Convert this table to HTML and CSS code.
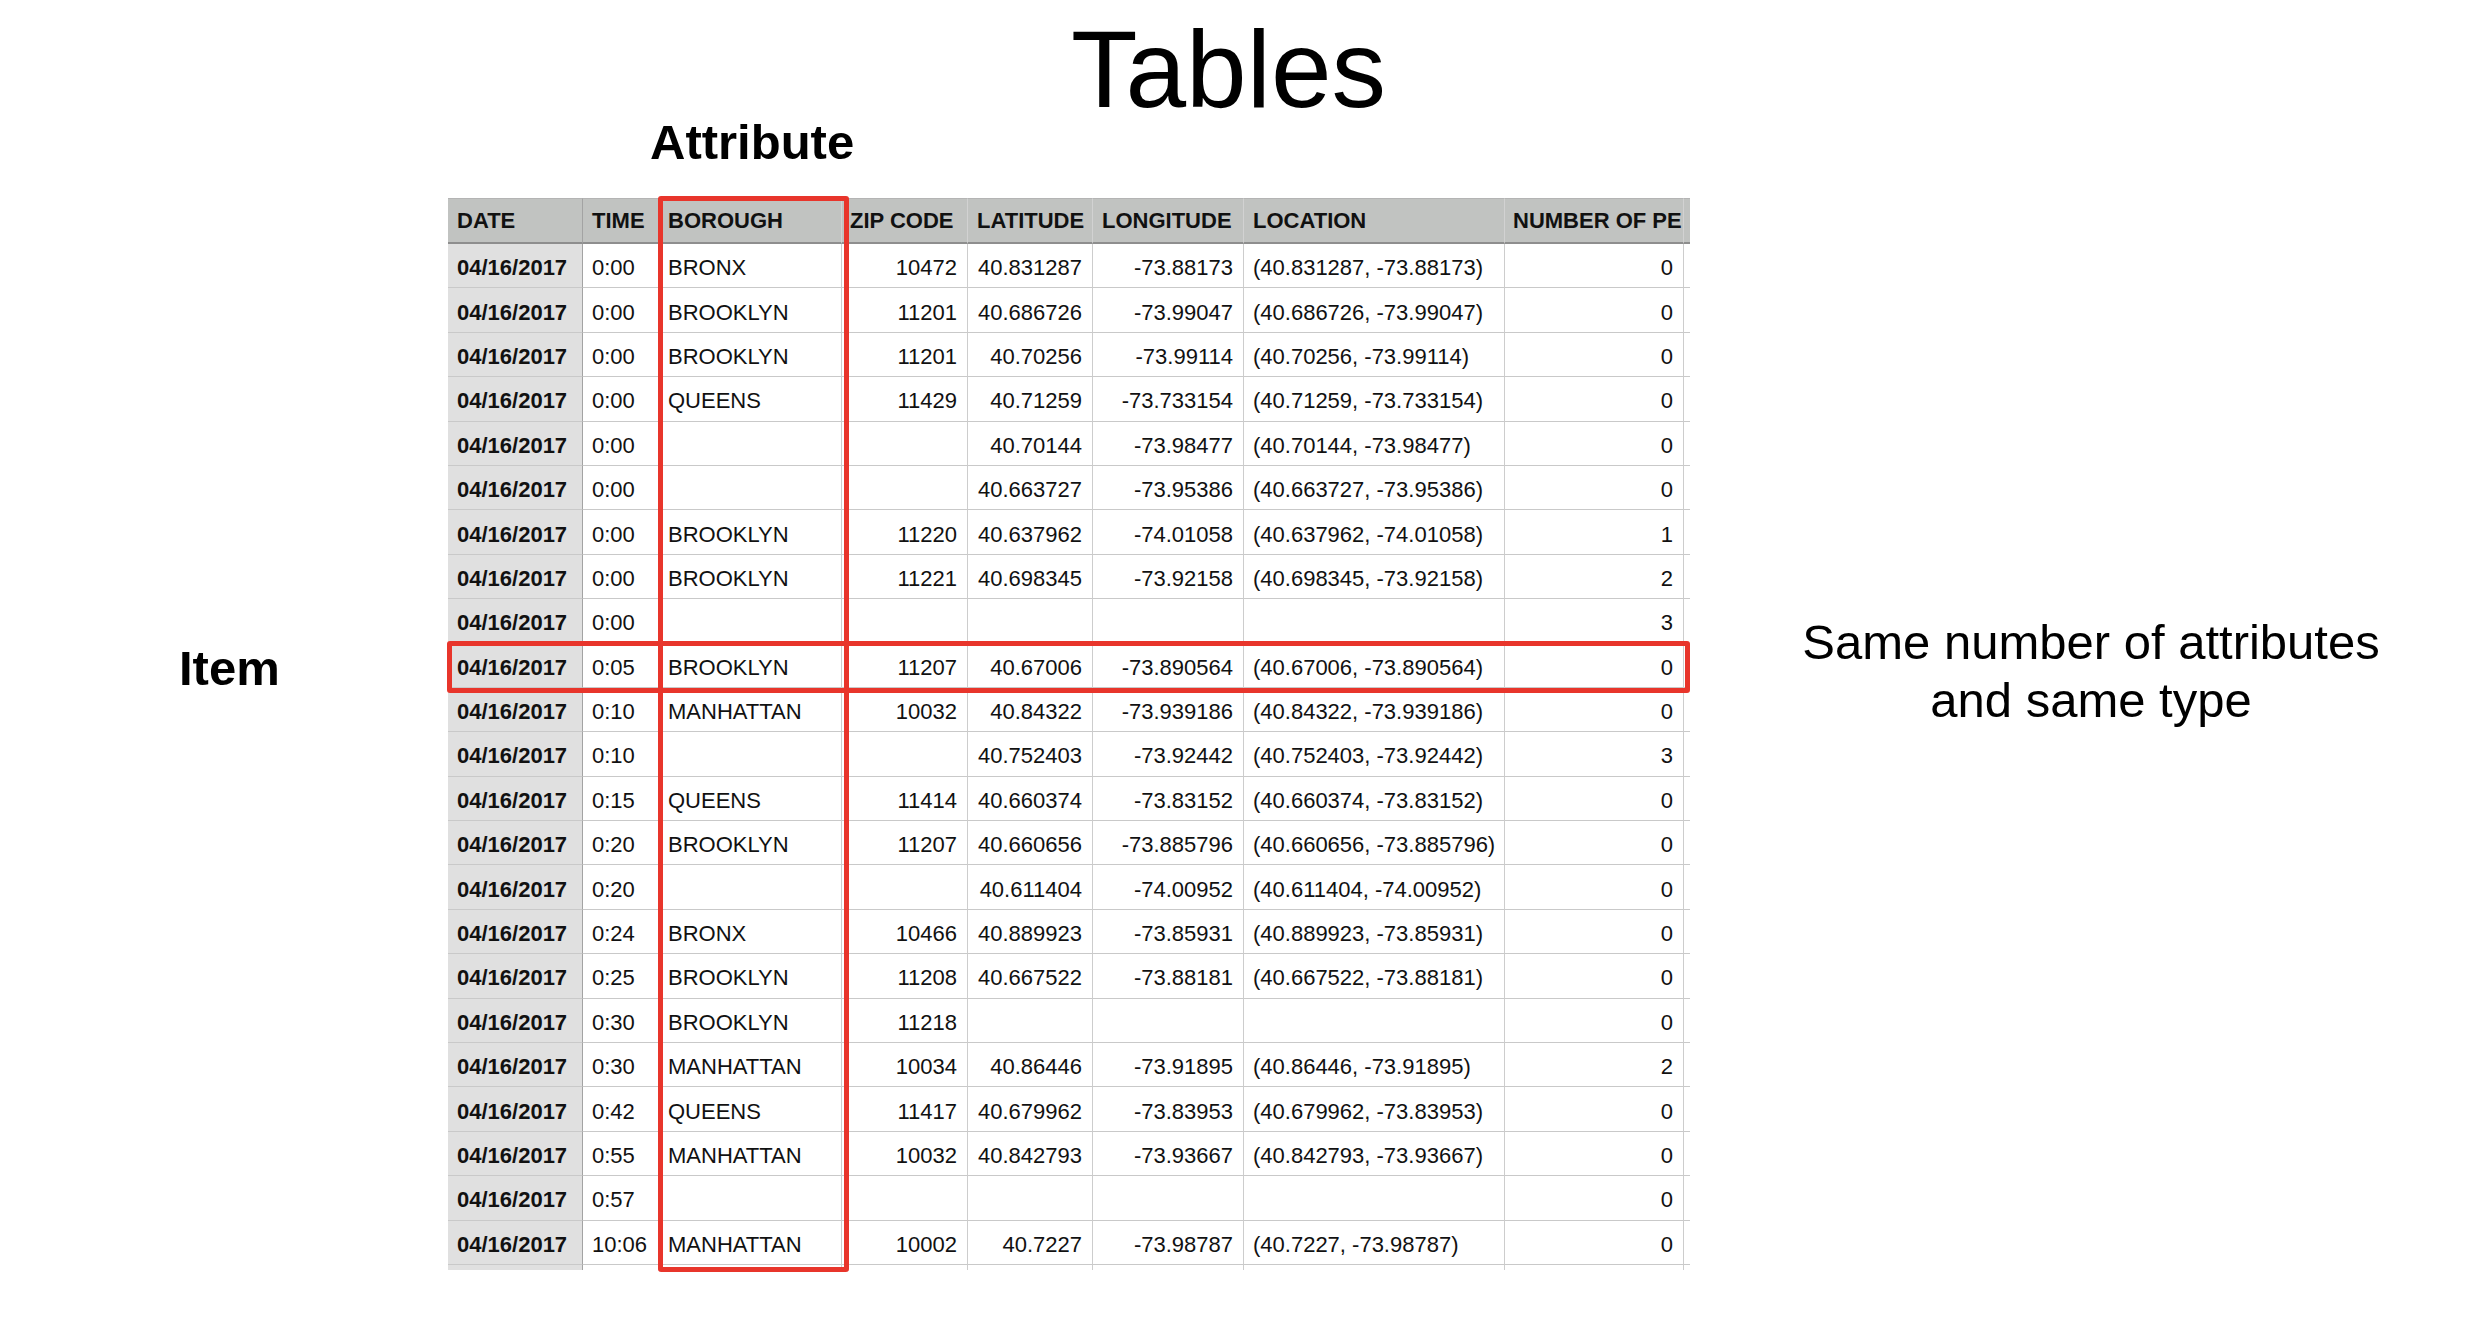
FILE: index.html
```html
<!DOCTYPE html>
<html lang="en">
<head>
<meta charset="utf-8">
<title>Tables</title>
<link rel="stylesheet" href="styles.css">
</head>
<body>
<div class="page">
  <h1 class="title">Tables</h1>
  <div class="content">
    <div class="left-col">
      <div class="item-label">Item</div>
    </div>
    <div class="table-area">
      <div class="attr-label">Attribute</div>
      <div class="table-wrap">
        <table class="sheet">
          <thead>
            <tr>
              <th class="c-date">DATE</th>
              <th class="c-time">TIME</th>
              <th class="c-bor">BOROUGH</th>
              <th class="c-zip">ZIP CODE</th>
              <th class="c-lat">LATITUDE</th>
              <th class="c-lon">LONGITUDE</th>
              <th class="c-loc">LOCATION</th>
              <th class="c-num">NUMBER OF PE</th>
              <th class="c-extra"></th>
            </tr>
          </thead>
          <tbody>
            <tr><td class="d">04/16/2017</td><td>0:00</td><td>BRONX</td><td class="r">10472</td><td class="r">40.831287</td><td class="r">-73.88173</td><td>(40.831287, -73.88173)</td><td class="r">0</td><td></td></tr>
            <tr><td class="d">04/16/2017</td><td>0:00</td><td>BROOKLYN</td><td class="r">11201</td><td class="r">40.686726</td><td class="r">-73.99047</td><td>(40.686726, -73.99047)</td><td class="r">0</td><td></td></tr>
            <tr><td class="d">04/16/2017</td><td>0:00</td><td>BROOKLYN</td><td class="r">11201</td><td class="r">40.70256</td><td class="r">-73.99114</td><td>(40.70256, -73.99114)</td><td class="r">0</td><td></td></tr>
            <tr><td class="d">04/16/2017</td><td>0:00</td><td>QUEENS</td><td class="r">11429</td><td class="r">40.71259</td><td class="r">-73.733154</td><td>(40.71259, -73.733154)</td><td class="r">0</td><td></td></tr>
            <tr><td class="d">04/16/2017</td><td>0:00</td><td></td><td class="r"></td><td class="r">40.70144</td><td class="r">-73.98477</td><td>(40.70144, -73.98477)</td><td class="r">0</td><td></td></tr>
            <tr><td class="d">04/16/2017</td><td>0:00</td><td></td><td class="r"></td><td class="r">40.663727</td><td class="r">-73.95386</td><td>(40.663727, -73.95386)</td><td class="r">0</td><td></td></tr>
            <tr><td class="d">04/16/2017</td><td>0:00</td><td>BROOKLYN</td><td class="r">11220</td><td class="r">40.637962</td><td class="r">-74.01058</td><td>(40.637962, -74.01058)</td><td class="r">1</td><td></td></tr>
            <tr><td class="d">04/16/2017</td><td>0:00</td><td>BROOKLYN</td><td class="r">11221</td><td class="r">40.698345</td><td class="r">-73.92158</td><td>(40.698345, -73.92158)</td><td class="r">2</td><td></td></tr>
            <tr><td class="d">04/16/2017</td><td>0:00</td><td></td><td class="r"></td><td class="r"></td><td class="r"></td><td></td><td class="r">3</td><td></td></tr>
            <tr><td class="d">04/16/2017</td><td>0:05</td><td>BROOKLYN</td><td class="r">11207</td><td class="r">40.67006</td><td class="r">-73.890564</td><td>(40.67006, -73.890564)</td><td class="r">0</td><td></td></tr>
            <tr><td class="d">04/16/2017</td><td>0:10</td><td>MANHATTAN</td><td class="r">10032</td><td class="r">40.84322</td><td class="r">-73.939186</td><td>(40.84322, -73.939186)</td><td class="r">0</td><td></td></tr>
            <tr><td class="d">04/16/2017</td><td>0:10</td><td></td><td class="r"></td><td class="r">40.752403</td><td class="r">-73.92442</td><td>(40.752403, -73.92442)</td><td class="r">3</td><td></td></tr>
            <tr><td class="d">04/16/2017</td><td>0:15</td><td>QUEENS</td><td class="r">11414</td><td class="r">40.660374</td><td class="r">-73.83152</td><td>(40.660374, -73.83152)</td><td class="r">0</td><td></td></tr>
            <tr><td class="d">04/16/2017</td><td>0:20</td><td>BROOKLYN</td><td class="r">11207</td><td class="r">40.660656</td><td class="r">-73.885796</td><td>(40.660656, -73.885796)</td><td class="r">0</td><td></td></tr>
            <tr><td class="d">04/16/2017</td><td>0:20</td><td></td><td class="r"></td><td class="r">40.611404</td><td class="r">-74.00952</td><td>(40.611404, -74.00952)</td><td class="r">0</td><td></td></tr>
            <tr><td class="d">04/16/2017</td><td>0:24</td><td>BRONX</td><td class="r">10466</td><td class="r">40.889923</td><td class="r">-73.85931</td><td>(40.889923, -73.85931)</td><td class="r">0</td><td></td></tr>
            <tr><td class="d">04/16/2017</td><td>0:25</td><td>BROOKLYN</td><td class="r">11208</td><td class="r">40.667522</td><td class="r">-73.88181</td><td>(40.667522, -73.88181)</td><td class="r">0</td><td></td></tr>
            <tr><td class="d">04/16/2017</td><td>0:30</td><td>BROOKLYN</td><td class="r">11218</td><td class="r"></td><td class="r"></td><td></td><td class="r">0</td><td></td></tr>
            <tr><td class="d">04/16/2017</td><td>0:30</td><td>MANHATTAN</td><td class="r">10034</td><td class="r">40.86446</td><td class="r">-73.91895</td><td>(40.86446, -73.91895)</td><td class="r">2</td><td></td></tr>
            <tr><td class="d">04/16/2017</td><td>0:42</td><td>QUEENS</td><td class="r">11417</td><td class="r">40.679962</td><td class="r">-73.83953</td><td>(40.679962, -73.83953)</td><td class="r">0</td><td></td></tr>
            <tr><td class="d">04/16/2017</td><td>0:55</td><td>MANHATTAN</td><td class="r">10032</td><td class="r">40.842793</td><td class="r">-73.93667</td><td>(40.842793, -73.93667)</td><td class="r">0</td><td></td></tr>
            <tr><td class="d">04/16/2017</td><td>0:57</td><td></td><td class="r"></td><td class="r"></td><td class="r"></td><td></td><td class="r">0</td><td></td></tr>
            <tr><td class="d">04/16/2017</td><td>10:06</td><td>MANHATTAN</td><td class="r">10002</td><td class="r">40.7227</td><td class="r">-73.98787</td><td>(40.7227, -73.98787)</td><td class="r">0</td><td></td></tr>
            <tr class="tail"><td class="d"></td><td></td><td></td><td class="r"></td><td class="r"></td><td class="r"></td><td></td><td class="r"></td><td></td></tr>
          </tbody>
        </table>
      </div>
      <div class="mark mark-col"></div>
      <div class="mark mark-row"></div>
    </div>
    <div class="right-col">
      <p class="note">Same number of attributes<br>and same type</p>
    </div>
  </div>
</div>
</body>
</html>
```

FILE: styles.css
```css
html, body {
  margin: 0;
  padding: 0;
  background: #ffffff;
}

body {
  width: 2466px;
  height: 1330px;
  overflow: hidden;
  font-family: "Liberation Sans", Arial, Helvetica, sans-serif;
  color: #000000;
}

.page {
  padding-top: 24px;
}

.title {
  margin: 0 0 3px 0;
  padding-right: 9px;
  text-align: center;
  font-size: 109px;
  line-height: 90px;
  font-weight: normal;
  color: #000000;
}

.content {
  display: grid;
  grid-template-columns: 448px 1242px 1fr;
  align-items: start;
}

.left-col {
  padding-top: 528px;
  padding-left: 179px;
}

.item-label {
  font-size: 49px;
  line-height: 47px;
  font-weight: bold;
}

.table-area {
  position: relative;
}

.attr-label {
  margin-top: 2px;
  margin-left: 202px;
  width: 200px;
  text-align: center;
  font-size: 49px;
  line-height: 47px;
  font-weight: bold;
}

.table-wrap {
  margin-top: 32px;
  width: 1242px;
  height: 1072px;
  overflow: hidden;
}

.sheet {
  border-collapse: separate;
  border-spacing: 0;
  table-layout: fixed;
  width: 1336px;
  font-size: 22px;
  color: #111111;
}

.sheet th,
.sheet td {
  box-sizing: border-box;
  padding: 5px 10px 0 9px;
  white-space: nowrap;
  overflow: hidden;
  text-overflow: clip;
  text-align: left;
  line-height: 24px;
}

.sheet th {
  height: 46px;
  background: #c1c3c1;
  font-weight: bold;
  border-top: 1px solid #b4b4b4;
  border-bottom: 2px solid #8e8e8e;
  border-right: 1px solid #d2d2d2;
  padding-top: 1px;
}

.sheet td {
  height: 44.4px;
  background: #ffffff;
  border-bottom: 1px solid #c9c9c9;
  border-right: 1px solid #cdcdcd;
}

.sheet td.d {
  background: #e0e0e0;
  font-weight: bold;
  border-right: 1px solid #a3a3a3;
}

.sheet td.r {
  text-align: right;
}

.sheet th.c-date { width: 135px; border-right-color: #a3a3a3; }
.sheet th.c-time { width: 76px; }
.sheet th.c-bor  { width: 183px; }
.sheet th.c-zip  { width: 126px; padding-left: 8px; }
.sheet th.c-lat  { width: 125px; }
.sheet th.c-lon  { width: 151px; }
.sheet th.c-loc  { width: 261px; }
.sheet th.c-num  { width: 179px; padding-right: 0; padding-left: 8px; }
.sheet th.c-extra { width: 100px; }

.mark {
  position: absolute;
  box-sizing: border-box;
  border: 5px solid #e8352b;
  border-radius: 3px;
  pointer-events: none;
}

.mark-col {
  left: 210px;
  top: 79px;
  width: 191px;
  height: 1076px;
}

.mark-row {
  left: -1px;
  top: 524px;
  width: 1243px;
  height: 52px;
}

.right-col {
  padding-top: 496px;
  padding-left: 26px;
}

.note {
  margin: 0;
  text-align: center;
  font-size: 49px;
  line-height: 58px;
  font-weight: normal;
}
```
